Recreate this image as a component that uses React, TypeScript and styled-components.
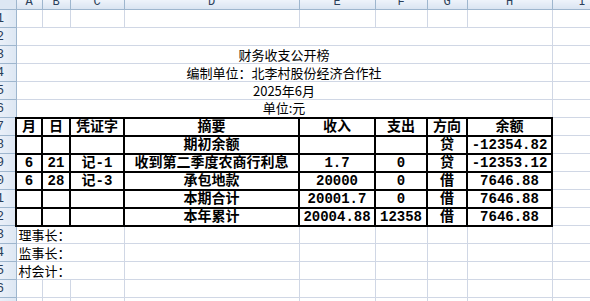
import React from 'react';
import styled, { createGlobalStyle, css } from 'styled-components';

const Global = createGlobalStyle`
  html, body { margin: 0; padding: 0; background: #fff; overflow: hidden; }
  #root { width: 590px; height: 301px; overflow: hidden; }
`;

const Sheet = styled.table`
  border-collapse: collapse;
  table-layout: fixed;
  width: 612px;
  font-family: "Noto Sans CJK SC", sans-serif;
  font-size: 13px;
  color: #000;
`;

const ColHead = styled.th`
  height: 9px;
  padding: 0;
  background: linear-gradient(#eef3fa, #dae4f1);
  border: 1px solid #9eb6ce;
  border-top: none;
  font-weight: normal;
`;

const HeadClip = styled.div`
  height: 9px;
  overflow: hidden;
  font-family: "Liberation Mono", monospace;
  font-size: 12px;
  line-height: 12px;
  color: #2b3f5a;
  text-align: center;
`;

const HeadText = styled.span`
  display: block;
  margin-top: -4px;
`;

const Corner = styled.th`
  height: 9px;
  padding: 0;
  background: #dde7f3;
  border: 1px solid #9eb6ce;
  border-top: none;
  border-left: none;
`;

const RowHead = styled.th`
  padding: 0;
  background: linear-gradient(90deg, #e9eff8, #dde7f3);
  border-right: 1px solid #9eb6ce;
  border-bottom: 1px solid #9eb6ce;
  font-weight: normal;
`;

const RowClip = styled.div`
  width: 16px;
  overflow: hidden;
  display: flex;
  justify-content: flex-end;
  box-sizing: border-box;
  padding-right: 12px;
  font-family: "Liberation Mono", monospace;
  font-size: 13px;
  color: #2b3f5a;
  white-space: nowrap;
`;

const RowNum = styled.span`
  flex: none;
`;

const Row = styled.tr`
  height: 18px;
`;

type CellProps = { $boxed?: boolean; $align?: 'left' | 'center' | 'right'; $strong?: boolean };

const Cell = styled.td<CellProps>`
  padding: 0 2px;
  border: 1px solid #d0d7e5;
  white-space: nowrap;
  overflow: hidden;
  line-height: 16px;
  text-align: ${(p) => p.$align || 'left'};
  ${(p) =>
    p.$boxed &&
    css`
      border: 2px solid #000;
    `}
  ${(p) =>
    p.$strong &&
    css`
      font-family: "Liberation Mono", "Noto Sans CJK SC", monospace;
      font-weight: 700;
      font-size: 14px;
    `}
`;

const cols = [16, 26, 28, 54, 175, 76, 52, 40, 85, 60];
const letters = ['A', 'B', 'C', 'D', 'E', 'F', 'G', 'H', 'I'];

const Num = ({ n }: { n: number }) => (
  <RowHead>
    <RowClip>
      <RowNum>{n}</RowNum>
    </RowClip>
  </RowHead>
);

const tableRows: string[][] = [
  ['月', '日', '凭证字', '摘要', '收入', '支出', '方向', '余额'],
  ['', '', '', '期初余额', '', '', '贷', '-12354.82'],
  ['6', '21', '记-1', '收到第二季度农商行利息', '1.7', '0', '贷', '-12353.12'],
  ['6', '28', '记-3', '承包地款', '20000', '0', '借', '7646.88'],
  ['', '', '', '本期合计', '20001.7', '0', '借', '7646.88'],
  ['', '', '', '本年累计', '20004.88', '12358', '借', '7646.88'],
];

const titles = ['', '财务收支公开榜', '编制单位：北李村股份经济合作社', '2025年6月', '单位:元'];
const signers = ['理事长：', '监事长：', '村会计：'];

const Blank = ({ count }: { count: number }) => (
  <>
    {Array.from({ length: count }, (_, i) => (
      <Cell key={i} />
    ))}
  </>
);

export default function App() {
  return (
    <>
      <Global />
      <Sheet>
        <colgroup>
          {cols.map((w, i) => (
            <col key={i} style={{ width: w }} />
          ))}
        </colgroup>
        <thead>
          <tr>
            <Corner />
            {letters.map((l) => (
              <ColHead key={l}>
                <HeadClip>
                  <HeadText>{l}</HeadText>
                </HeadClip>
              </ColHead>
            ))}
          </tr>
        </thead>
        <tbody>
          <Row>
            <Num n={1} />
            <Blank count={9} />
          </Row>
          {titles.map((t, i) => (
            <Row key={'t' + i}>
              <Num n={i + 2} />
              <Cell colSpan={8} $align="center">
                {t}
              </Cell>
              <Cell />
            </Row>
          ))}
          {tableRows.map((r, i) => (
            <Row key={'r' + i}>
              <Num n={i + 7} />
              {r.map((v, j) => (
                <Cell key={j} $boxed $strong $align="center">
                  {v}
                </Cell>
              ))}
              <Cell />
            </Row>
          ))}
          {signers.map((s, i) => (
            <Row key={'s' + i}>
              <Num n={i + 13} />
              <Cell colSpan={3}>{s}</Cell>
              <Blank count={6} />
            </Row>
          ))}
          <Row>
            <Num n={16} />
            <Blank count={9} />
          </Row>
          <Row>
            <Num n={17} />
            <Blank count={9} />
          </Row>
        </tbody>
      </Sheet>
    </>
  );
}
